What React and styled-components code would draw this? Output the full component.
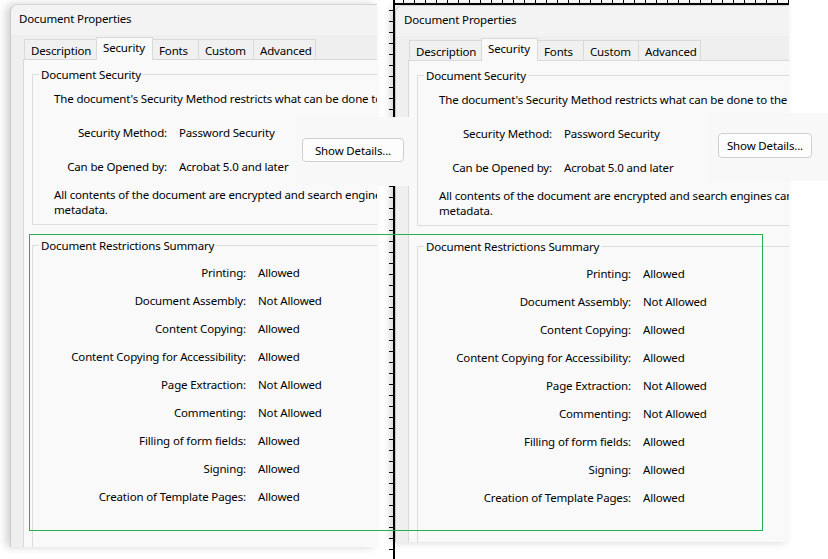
import styled, { createGlobalStyle } from "styled-components";

const GlobalStyle = createGlobalStyle`
  html, body {
    margin: 0;
    padding: 0;
    background: #ffffff;
  }
  body {
    font-family: "Noto Sans", "Open Sans", sans-serif;
    font-size: 11.5px;
    letter-spacing: -0.15px;
    color: #000000;
  }
`;

const tabs = [
  { name: "Description", w: 73 },
  { name: "Security", w: 57, active: true },
  { name: "Fonts", w: 47 },
  { name: "Custom", w: 56 },
  { name: "Advanced", w: 63 },
];

const restrictions = [
  ["Printing", "Allowed"],
  ["Document Assembly", "Not Allowed"],
  ["Content Copying", "Allowed"],
  ["Content Copying for Accessibility", "Allowed"],
  ["Page Extraction", "Not Allowed"],
  ["Commenting", "Not Allowed"],
  ["Filling of form fields", "Allowed"],
  ["Signing", "Allowed"],
  ["Creation of Template Pages", "Allowed"],
];

const windows = [
  { id: "back", x: 10, y: 4, w: 367, h: 543 },
  { id: "front", x: 395, y: 5, w: 394, h: 537 },
];

const strips = [
  { id: "back", x: 295, y: 117, w: 120, h: 69, pt: 21, pl: 7, bw: 102, bh: 24 },
  { id: "front", x: 708, y: 113, w: 120, h: 68, pt: 20, pl: 10, bw: 94, bh: 25 },
];

const DocumentProperties = () => (
  <>
    <TitleBar>Document Properties</TitleBar>
    <Body>
      <TabStrip>
        {tabs.map((t) => (
          <Tab key={t.name} $w={t.w} $active={t.active}>
            {t.name}
          </Tab>
        ))}
      </TabStrip>
      <Panel>
        <Group>
          <Legend>Document Security</Legend>
          <Intro>
            The document's Security Method restricts what can be done to the
            document. To remove restrictions, set the Security Method to No
            Security.
          </Intro>
          <InfoGrid>
            <InfoLabel>Security Method:</InfoLabel>
            <span>Password Security</span>
            <InfoLabel>Can be Opened by:</InfoLabel>
            <span>Acrobat 5.0 and later</span>
          </InfoGrid>
          <Note>
            <NoteLine>
              All contents of the document are encrypted and search engines
              cannot access the document's
            </NoteLine>
            <NoteLine>metadata.</NoteLine>
          </Note>
        </Group>
        <Group $gap>
          <Legend>Document Restrictions Summary</Legend>
          <RestrictGrid>
            {restrictions.map(([label, value]) => (
              <Row key={label}>
                <RowLabel>{label}:</RowLabel>
                <span>{value}</span>
              </Row>
            ))}
          </RestrictGrid>
        </Group>
      </Panel>
    </Body>
  </>
);

const App = () => {
  return (
    <>
      <GlobalStyle />
      <Canvas>
        {windows.map((w) => (
          <Window key={w.id} $x={w.x} $y={w.y} $w={w.w} $h={w.h}>
            <DocumentProperties />
          </Window>
        ))}
        <VRuler />
        <HRuler />
        {strips.map((s) => (
          <Strip key={s.id} $x={s.x} $y={s.y} $w={s.w} $h={s.h} $pt={s.pt} $pl={s.pl}>
            <Button $w={s.bw} $h={s.bh}>Show Details...</Button>
          </Strip>
        ))}
        <Selection />
      </Canvas>
    </>
  );
};

const Canvas = styled.div`
  position: relative;
  width: 828px;
  height: 559px;
  overflow: hidden;
  background: #ffffff;
`;

const Window = styled.div`
  position: absolute;
  left: ${(p) => p.$x}px;
  top: ${(p) => p.$y}px;
  width: ${(p) => p.$w}px;
  height: ${(p) => p.$h}px;
  box-sizing: border-box;
  overflow: hidden;
  display: flex;
  flex-direction: column;
  background: #efefef;
  border-left: 1px solid #c9c9c9;
  border-top: 1px solid #d4d4d4;
  border-top-left-radius: 8px;
  box-shadow: -4px 0 9px rgba(0, 0, 0, 0.18);
`;

const TitleBar = styled.div`
  flex: none;
  height: 30px;
  box-sizing: border-box;
  display: flex;
  align-items: center;
  padding: 0 0 4px 8px;
  background: #f3f3f3;
  white-space: nowrap;
`;

const Body = styled.div`
  flex: 1;
  display: flex;
  flex-direction: column;
  padding: 2px 0 0 12px;
`;

const TabStrip = styled.div`
  display: flex;
  align-items: flex-end;
  margin-left: 1px;
  height: 22px;
`;

const Tab = styled.div`
  position: relative;
  box-sizing: border-box;
  width: ${(p) => p.$w}px;
  height: ${(p) => (p.$active ? 23 : 20)}px;
  margin-left: -1px;
  margin-bottom: ${(p) => (p.$active ? -1 : 0)}px;
  padding: ${(p) => (p.$active ? "2px 0 0 6px" : "3px 0 0 6px")};
  border: 1px solid #d9d9d9;
  border-bottom: none;
  background: ${(p) => (p.$active ? "#f9f9f9" : "#f0f0f0")};
  z-index: ${(p) => (p.$active ? 1 : 0)};
  white-space: nowrap;
  line-height: 15px;
  &:first-child {
    margin-left: 0;
  }
`;

const Panel = styled.div`
  flex: 1;
  width: 560px;
  box-sizing: border-box;
  border: 1px solid #d9d9d9;
  background: #f9f9f9;
  padding: 6px 0 0 8px;
`;

const Group = styled.fieldset`
  margin: ${(p) => (p.$gap ? "12px" : "0")} 0 0 0;
  padding: 0;
  min-width: 0;
  width: 530px;
  border: 1px solid #dcdcdc;
`;

const Legend = styled.legend`
  margin-left: 6px;
  padding: 0 2px;
  line-height: 17px;
  white-space: nowrap;
`;

const Intro = styled.div`
  margin-top: 8px;
  padding-left: 21px;
  line-height: 16px;
  white-space: nowrap;
`;

const InfoGrid = styled.div`
  display: grid;
  grid-template-columns: 134px auto;
  grid-auto-rows: 34px;
  column-gap: 12px;
  align-items: center;
  margin-top: 8px;
  white-space: nowrap;
`;

const InfoLabel = styled.span`
  text-align: right;
`;

const Note = styled.div`
  display: flex;
  flex-direction: column;
  margin-top: 4px;
  padding: 0 0 7px 21px;
`;

const NoteLine = styled.div`
  height: 15px;
  line-height: 15px;
  white-space: nowrap;
`;

const RestrictGrid = styled.div`
  padding-top: 4px;
  padding-bottom: 40px;
`;

const Row = styled.div`
  display: grid;
  grid-template-columns: 213px auto;
  column-gap: 12px;
  align-items: center;
  height: 28px;
  white-space: nowrap;
`;

const RowLabel = styled.span`
  text-align: right;
`;

const VRuler = styled.div`
  position: absolute;
  left: 389px;
  top: 0;
  width: 6px;
  height: 559px;
  background:
    linear-gradient(#000, #000) right top / 2px 100% no-repeat,
    repeating-linear-gradient(to bottom, transparent 0 10px, #000 10px 11px) left top / 4px 100% no-repeat;
`;

const HRuler = styled.div`
  position: absolute;
  left: 393px;
  top: 0;
  width: 396px;
  height: 5px;
  background:
    linear-gradient(#000, #000) left bottom / 100% 2px no-repeat,
    repeating-linear-gradient(to right, transparent 0 10px, #000 10px 11px) left top / 100% 3px no-repeat;
`;

const Strip = styled.div`
  position: absolute;
  left: ${(p) => p.$x}px;
  top: ${(p) => p.$y}px;
  width: ${(p) => p.$w}px;
  height: ${(p) => p.$h}px;
  box-sizing: border-box;
  padding: ${(p) => p.$pt}px 0 0 ${(p) => p.$pl}px;
  background: #f8f8f8;
`;

const Button = styled.div`
  box-sizing: border-box;
  width: ${(p) => p.$w}px;
  height: ${(p) => p.$h}px;
  display: flex;
  align-items: center;
  justify-content: center;
  border: 1px solid #d0d0d0;
  border-radius: 4px;
  background: #fdfdfd;
  white-space: nowrap;
`;

const Selection = styled.div`
  position: absolute;
  left: 29px;
  top: 234px;
  width: 734px;
  height: 297px;
  box-sizing: border-box;
  border: 1px solid #22b14c;
  pointer-events: none;
`;

export default App;
